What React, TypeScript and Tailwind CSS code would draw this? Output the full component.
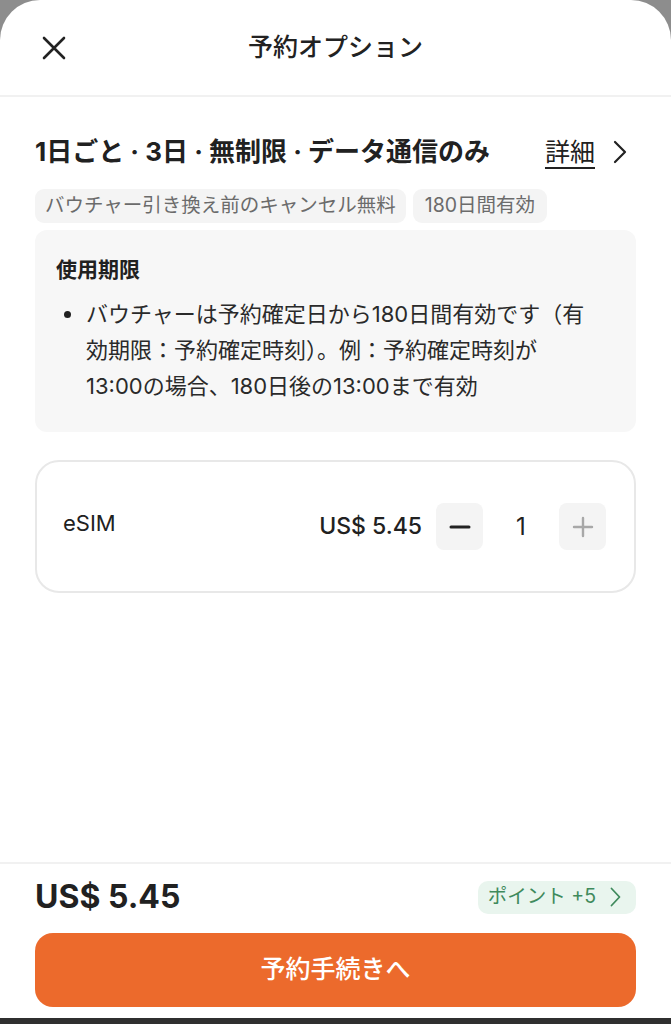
import React from "react";

const font = { fontFamily: '"Inter", "Noto Sans CJK JP", sans-serif' };

export default function App() {
  return (
    <div className="w-[671px] h-[1024px] bg-[#8d8d8d] flex flex-col overflow-hidden" style={font}>
      <div className="flex-1 bg-white rounded-t-[40px] flex flex-col">
        {/* Header */}
        <div className="h-[97px] border-b-2 border-[#f1f1f1] flex items-center relative">
          <div className="pl-[42px]">
            <svg width="24" height="24" viewBox="0 0 24 24" fill="none" stroke="#222" strokeWidth="2.6" strokeLinecap="round">
              <path d="M2 2L22 22M22 2L2 22" />
            </svg>
          </div>
          <div className="absolute left-0 right-0 text-center text-[25px] font-medium text-[#222] pointer-events-none">予約オプション</div>
        </div>

        {/* Content */}
        <div className="flex-1 px-[35px] pt-[40px]">
          <div className="flex items-center justify-between h-[30px]">
            <div className="text-[26px] font-bold text-[#212121] leading-[30px] whitespace-nowrap">1日ごと · 3日 · 無制限 · データ通信のみ</div>
            <div className="flex items-center gap-[17px] pr-[8px]">
              <span className="text-[25px] leading-[30px] text-[#212121] underline underline-offset-[6px] decoration-[1.5px]">詳細</span>
              <svg width="16" height="24" viewBox="0 0 16 24" fill="none" stroke="#222" strokeWidth="2.2" strokeLinecap="round" strokeLinejoin="round">
                <path d="M3 2L13 12L3 22" />
              </svg>
            </div>
          </div>

          <div className="flex gap-[7px] mt-[22px]">
            <span className="h-[34px] px-[10px] flex items-center rounded-[9px] bg-[#f4f4f4] text-[19.5px] text-[#6b6b6b] whitespace-nowrap">バウチャー引き換え前のキャンセル無料</span>
            <span className="h-[34px] px-[12px] flex items-center rounded-[9px] bg-[#f4f4f4] text-[19.5px] text-[#6b6b6b] whitespace-nowrap">180日間有効</span>
          </div>

          <div className="mt-[7px] rounded-[12px] bg-[#f7f7f7] pl-[21px] pr-[20px] pt-[28px] pb-[28px]">
            <div className="text-[21px] font-bold text-[#212121] leading-[24px]">使用期限</div>
            <div className="flex mt-[14px]">
              <div className="w-[30px] shrink-0 flex pt-[15px] pl-[8px]">
                <span className="w-[7px] h-[7px] rounded-full bg-[#212121]" />
              </div>
              <div className="text-[22px] leading-[36px] text-[#2a2a2a] whitespace-nowrap">
                バウチャーは予約確定日から180日間有効です（有<br />
                効期限：予約確定時刻）。例：予約確定時刻が<br />
                13:00の場合、180日後の13:00まで有効
              </div>
            </div>
          </div>

          <div className="mt-[28px] h-[133px] rounded-[24px] border-2 border-[#e8e8e8] flex items-center pl-[26px] pr-[28px]">
            <div className="text-[22px] text-[#212121] flex-1 -mt-[6px]">eSIM</div>
            <div className="text-[23px] font-medium text-[#212121] mr-[14px]">US$ 5.45</div>
            <div className="w-[47px] h-[47px] rounded-[8px] bg-[#f4f4f4] flex items-center justify-center">
              <svg width="22" height="22" viewBox="0 0 22 22"><path d="M2 11H20" stroke="#222" strokeWidth="3" strokeLinecap="round" /></svg>
            </div>
            <div className="w-[76px] text-center text-[24px] text-[#212121]">1</div>
            <div className="w-[47px] h-[47px] rounded-[8px] bg-[#f4f4f4] flex items-center justify-center">
              <svg width="22" height="22" viewBox="0 0 22 22"><path d="M2 11H20M11 2V20" stroke="#a8a8a8" strokeWidth="2.4" strokeLinecap="round" /></svg>
            </div>
          </div>
        </div>

        {/* Footer */}
        <div className="border-t-2 border-[#f1f1f1] px-[35px] pt-[15px] pb-[11px]">
          <div className="flex items-center justify-between">
            <div className="text-[32px] font-bold text-[#212121] leading-[36px]">US$ 5.45</div>
            <div className="h-[33px] rounded-[10px] bg-[#e9f5ee] flex items-center gap-[14px] pl-[10px] pr-[15px]">
              <span className="text-[19.5px] text-[#3f8a5c]">ポイント +5</span>
              <svg width="11" height="20" viewBox="0 0 11 20" fill="none" stroke="#3f8a5c" strokeWidth="1.8" strokeLinecap="round" strokeLinejoin="round"><path d="M1.5 1.5L9.5 10L1.5 18.5" /></svg>
            </div>
          </div>
          <div className="mt-[18px] h-[74px] rounded-[18px] bg-[#ec6a2c] flex items-center justify-center text-[25px] font-medium text-white">予約手続きへ</div>
        </div>
      </div>
      <div className="h-[6px] bg-[#2f2f2f]" />
    </div>
  );
}
